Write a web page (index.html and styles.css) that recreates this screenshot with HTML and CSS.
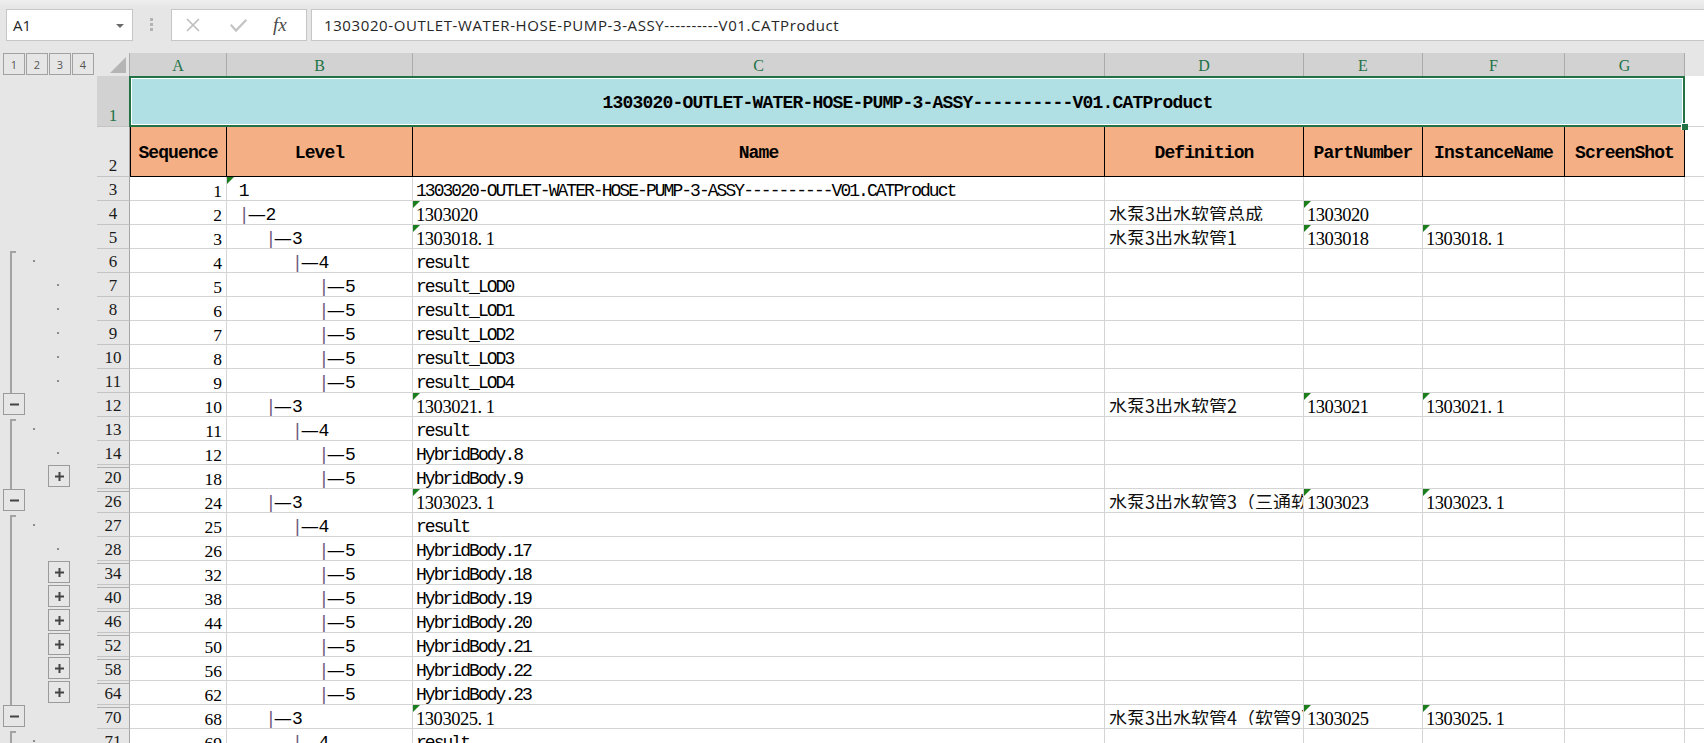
FILE: index.html
```html
<!DOCTYPE html>
<html lang="zh">
<head>
<meta charset="utf-8">
<title>Excel</title>
<link rel="stylesheet" href="styles.css">
</head>
<body>
<div class="toolbar">
  <div class="namebox"><span>A1</span><svg class="nb-arrow" width="8" height="4" viewBox="0 0 8 4"><path d="M0 0H8L4 4Z" fill="#6b6b6b"/></svg></div>
  <div class="grip"><i></i><i></i><i></i></div>
  <div class="fbtns">
    <svg class="ic-x" width="16" height="16" viewBox="0 0 16 16"><path d="M2 2L14 14M14 2L2 14" stroke="#bdbdbd" stroke-width="1.6" fill="none"/></svg>
    <svg class="ic-ok" width="17" height="13" viewBox="0 0 17 13"><path d="M0.8 5.8L6 11.6L16.3 0.8" stroke="#c4c4c4" stroke-width="2.2" fill="none"/></svg>
    <span class="fx">fx</span>
  </div>
  <div class="fbar">1303020-OUTLET-WATER-HOSE-PUMP-3-ASSY----------V01.CATProduct</div>
</div>

<div class="sheet">
  <div class="row hdr">
    <div class="ol lvbtns"><span>1</span><span>2</span><span>3</span><span>4</span></div>
    <div class="corner"><svg width="16" height="16" viewBox="0 0 16 16"><path d="M16 0V16H0Z" fill="#b5b5b5"/></svg></div>
    <div class="ch sel">A</div><div class="ch sel">B</div><div class="ch sel">C</div><div class="ch sel">D</div><div class="ch sel">E</div><div class="ch sel">F</div><div class="ch sel">G</div><div class="ch"></div>
  </div>

  <div class="row r1">
    <div class="ol"></div>
    <div class="rh sel">1</div>
    <div class="title">1303020-OUTLET-WATER-HOSE-PUMP-3-ASSY----------V01.CATProduct</div>
    <div class="c end"></div>
  </div>

  <div class="row r2">
    <div class="ol"></div>
    <div class="rh">2</div>
    <div class="h2 first">Sequence</div><div class="h2">Level</div><div class="h2">Name</div><div class="h2">Definition</div><div class="h2">PartNumber</div><div class="h2">InstanceName</div><div class="h2">ScreenShot</div>
    <div class="c end"></div>
  </div>

  <div class="row">
    <div class="ol"></div>
    <div class="rh">3</div>
    <div class="c num">1</div>
    <div class="c tri"><span class="lv"> 1</span></div>
    <div class="c">1303020-OUTLET-WATER-HOSE-PUMP-3-ASSY----------V01.CATProduct</div>
    <div class="c"></div><div class="c"></div><div class="c"></div><div class="c"></div><div class="c end"></div>
  </div>

  <div class="row">
    <div class="ol"></div>
    <div class="rh">4</div>
    <div class="c num">2</div>
    <div class="c"><span class="lv"> <b class="bar">|</b><i class="dash">—</i>2</span></div>
    <div class="c tri sn">1303020</div>
    <div class="c cjk"><span>水泵3出水软管总成</span></div>
    <div class="c tri sn">1303020</div>
    <div class="c"></div><div class="c"></div><div class="c end"></div>
  </div>

  <div class="row">
    <div class="ol"></div>
    <div class="rh">5</div>
    <div class="c num">3</div>
    <div class="c"><span class="lv">    <b class="bar">|</b><i class="dash">—</i>3</span></div>
    <div class="c tri sn"><span>1303018<span class="pt">.</span>1</span></div>
    <div class="c cjk"><span>水泵3出水软管1</span></div>
    <div class="c tri sn">1303018</div>
    <div class="c tri sn"><span>1303018<span class="pt">.</span>1</span></div>
    <div class="c"></div><div class="c end"></div>
  </div>

  <div class="row">
    <div class="ol"><span class="ln s"></span><span class="dot d2"></span></div>
    <div class="rh">6</div>
    <div class="c num">4</div>
    <div class="c"><span class="lv">       <b class="bar">|</b><i class="dash">—</i>4</span></div>
    <div class="c">result</div>
    <div class="c"></div><div class="c"></div><div class="c"></div><div class="c"></div><div class="c end"></div>
  </div>

  <div class="row">
    <div class="ol"><span class="ln"></span><span class="dot d3"></span></div>
    <div class="rh">7</div>
    <div class="c num">5</div>
    <div class="c"><span class="lv">          <b class="bar">|</b><i class="dash">—</i>5</span></div>
    <div class="c">result_LOD0</div>
    <div class="c"></div><div class="c"></div><div class="c"></div><div class="c"></div><div class="c end"></div>
  </div>

  <div class="row">
    <div class="ol"><span class="ln"></span><span class="dot d3"></span></div>
    <div class="rh">8</div>
    <div class="c num">6</div>
    <div class="c"><span class="lv">          <b class="bar">|</b><i class="dash">—</i>5</span></div>
    <div class="c">result_LOD1</div>
    <div class="c"></div><div class="c"></div><div class="c"></div><div class="c"></div><div class="c end"></div>
  </div>

  <div class="row">
    <div class="ol"><span class="ln"></span><span class="dot d3"></span></div>
    <div class="rh">9</div>
    <div class="c num">7</div>
    <div class="c"><span class="lv">          <b class="bar">|</b><i class="dash">—</i>5</span></div>
    <div class="c">result_LOD2</div>
    <div class="c"></div><div class="c"></div><div class="c"></div><div class="c"></div><div class="c end"></div>
  </div>

  <div class="row">
    <div class="ol"><span class="ln"></span><span class="dot d3"></span></div>
    <div class="rh">10</div>
    <div class="c num">8</div>
    <div class="c"><span class="lv">          <b class="bar">|</b><i class="dash">—</i>5</span></div>
    <div class="c">result_LOD3</div>
    <div class="c"></div><div class="c"></div><div class="c"></div><div class="c"></div><div class="c end"></div>
  </div>

  <div class="row">
    <div class="ol"><span class="ln"></span><span class="dot d3"></span></div>
    <div class="rh">11</div>
    <div class="c num">9</div>
    <div class="c"><span class="lv">          <b class="bar">|</b><i class="dash">—</i>5</span></div>
    <div class="c">result_LOD4</div>
    <div class="c"></div><div class="c"></div><div class="c"></div><div class="c"></div><div class="c end"></div>
  </div>

  <div class="row">
    <div class="ol"><span class="ob l1"><svg width="9" height="9" viewBox="0 0 9 9"><path d="M0 4.5H9" stroke="#444" stroke-width="2"/></svg></span></div>
    <div class="rh">12</div>
    <div class="c num">10</div>
    <div class="c"><span class="lv">    <b class="bar">|</b><i class="dash">—</i>3</span></div>
    <div class="c tri sn"><span>1303021<span class="pt">.</span>1</span></div>
    <div class="c cjk"><span>水泵3出水软管2</span></div>
    <div class="c tri sn">1303021</div>
    <div class="c tri sn"><span>1303021<span class="pt">.</span>1</span></div>
    <div class="c"></div><div class="c end"></div>
  </div>

  <div class="row">
    <div class="ol"><span class="ln s"></span><span class="dot d2"></span></div>
    <div class="rh">13</div>
    <div class="c num">11</div>
    <div class="c"><span class="lv">       <b class="bar">|</b><i class="dash">—</i>4</span></div>
    <div class="c">result</div>
    <div class="c"></div><div class="c"></div><div class="c"></div><div class="c"></div><div class="c end"></div>
  </div>

  <div class="row">
    <div class="ol"><span class="ln"></span><span class="dot d3"></span></div>
    <div class="rh">14</div>
    <div class="c num">12</div>
    <div class="c"><span class="lv">          <b class="bar">|</b><i class="dash">—</i>5</span></div>
    <div class="c">HybridBody.8</div>
    <div class="c"></div><div class="c"></div><div class="c"></div><div class="c"></div><div class="c end"></div>
  </div>

  <div class="row">
    <div class="ol"><span class="ln"></span><span class="ob l3"><svg width="9" height="9" viewBox="0 0 9 9"><path d="M0 4.5H9M4.5 0V9" stroke="#444" stroke-width="2"/></svg></span></div>
    <div class="rh hid">20</div>
    <div class="c num">18</div>
    <div class="c"><span class="lv">          <b class="bar">|</b><i class="dash">—</i>5</span></div>
    <div class="c">HybridBody.9</div>
    <div class="c"></div><div class="c"></div><div class="c"></div><div class="c"></div><div class="c end"></div>
  </div>

  <div class="row">
    <div class="ol"><span class="ob l1"><svg width="9" height="9" viewBox="0 0 9 9"><path d="M0 4.5H9" stroke="#444" stroke-width="2"/></svg></span></div>
    <div class="rh hid">26</div>
    <div class="c num">24</div>
    <div class="c"><span class="lv">    <b class="bar">|</b><i class="dash">—</i>3</span></div>
    <div class="c tri sn"><span>1303023<span class="pt">.</span>1</span></div>
    <div class="c cjk"><span>水泵3出水软管3（三通软管）</span></div>
    <div class="c tri sn">1303023</div>
    <div class="c tri sn"><span>1303023<span class="pt">.</span>1</span></div>
    <div class="c"></div><div class="c end"></div>
  </div>

  <div class="row">
    <div class="ol"><span class="ln s"></span><span class="dot d2"></span></div>
    <div class="rh">27</div>
    <div class="c num">25</div>
    <div class="c"><span class="lv">       <b class="bar">|</b><i class="dash">—</i>4</span></div>
    <div class="c">result</div>
    <div class="c"></div><div class="c"></div><div class="c"></div><div class="c"></div><div class="c end"></div>
  </div>

  <div class="row">
    <div class="ol"><span class="ln"></span><span class="dot d3"></span></div>
    <div class="rh">28</div>
    <div class="c num">26</div>
    <div class="c"><span class="lv">          <b class="bar">|</b><i class="dash">—</i>5</span></div>
    <div class="c">HybridBody.17</div>
    <div class="c"></div><div class="c"></div><div class="c"></div><div class="c"></div><div class="c end"></div>
  </div>

  <div class="row">
    <div class="ol"><span class="ln"></span><span class="ob l3"><svg width="9" height="9" viewBox="0 0 9 9"><path d="M0 4.5H9M4.5 0V9" stroke="#444" stroke-width="2"/></svg></span></div>
    <div class="rh hid">34</div>
    <div class="c num">32</div>
    <div class="c"><span class="lv">          <b class="bar">|</b><i class="dash">—</i>5</span></div>
    <div class="c">HybridBody.18</div>
    <div class="c"></div><div class="c"></div><div class="c"></div><div class="c"></div><div class="c end"></div>
  </div>

  <div class="row">
    <div class="ol"><span class="ln"></span><span class="ob l3"><svg width="9" height="9" viewBox="0 0 9 9"><path d="M0 4.5H9M4.5 0V9" stroke="#444" stroke-width="2"/></svg></span></div>
    <div class="rh hid">40</div>
    <div class="c num">38</div>
    <div class="c"><span class="lv">          <b class="bar">|</b><i class="dash">—</i>5</span></div>
    <div class="c">HybridBody.19</div>
    <div class="c"></div><div class="c"></div><div class="c"></div><div class="c"></div><div class="c end"></div>
  </div>

  <div class="row">
    <div class="ol"><span class="ln"></span><span class="ob l3"><svg width="9" height="9" viewBox="0 0 9 9"><path d="M0 4.5H9M4.5 0V9" stroke="#444" stroke-width="2"/></svg></span></div>
    <div class="rh hid">46</div>
    <div class="c num">44</div>
    <div class="c"><span class="lv">          <b class="bar">|</b><i class="dash">—</i>5</span></div>
    <div class="c">HybridBody.20</div>
    <div class="c"></div><div class="c"></div><div class="c"></div><div class="c"></div><div class="c end"></div>
  </div>

  <div class="row">
    <div class="ol"><span class="ln"></span><span class="ob l3"><svg width="9" height="9" viewBox="0 0 9 9"><path d="M0 4.5H9M4.5 0V9" stroke="#444" stroke-width="2"/></svg></span></div>
    <div class="rh hid">52</div>
    <div class="c num">50</div>
    <div class="c"><span class="lv">          <b class="bar">|</b><i class="dash">—</i>5</span></div>
    <div class="c">HybridBody.21</div>
    <div class="c"></div><div class="c"></div><div class="c"></div><div class="c"></div><div class="c end"></div>
  </div>

  <div class="row">
    <div class="ol"><span class="ln"></span><span class="ob l3"><svg width="9" height="9" viewBox="0 0 9 9"><path d="M0 4.5H9M4.5 0V9" stroke="#444" stroke-width="2"/></svg></span></div>
    <div class="rh hid">58</div>
    <div class="c num">56</div>
    <div class="c"><span class="lv">          <b class="bar">|</b><i class="dash">—</i>5</span></div>
    <div class="c">HybridBody.22</div>
    <div class="c"></div><div class="c"></div><div class="c"></div><div class="c"></div><div class="c end"></div>
  </div>

  <div class="row">
    <div class="ol"><span class="ln"></span><span class="ob l3"><svg width="9" height="9" viewBox="0 0 9 9"><path d="M0 4.5H9M4.5 0V9" stroke="#444" stroke-width="2"/></svg></span></div>
    <div class="rh hid">64</div>
    <div class="c num">62</div>
    <div class="c"><span class="lv">          <b class="bar">|</b><i class="dash">—</i>5</span></div>
    <div class="c">HybridBody.23</div>
    <div class="c"></div><div class="c"></div><div class="c"></div><div class="c"></div><div class="c end"></div>
  </div>

  <div class="row">
    <div class="ol"><span class="ob l1"><svg width="9" height="9" viewBox="0 0 9 9"><path d="M0 4.5H9" stroke="#444" stroke-width="2"/></svg></span></div>
    <div class="rh hid">70</div>
    <div class="c num">68</div>
    <div class="c"><span class="lv">    <b class="bar">|</b><i class="dash">—</i>3</span></div>
    <div class="c tri sn"><span>1303025<span class="pt">.</span>1</span></div>
    <div class="c cjk"><span>水泵3出水软管4（软管9）</span></div>
    <div class="c tri sn">1303025</div>
    <div class="c tri sn"><span>1303025<span class="pt">.</span>1</span></div>
    <div class="c"></div><div class="c end"></div>
  </div>

  <div class="row">
    <div class="ol"><span class="ln s"></span><span class="dot d2"></span></div>
    <div class="rh">71</div>
    <div class="c num">69</div>
    <div class="c"><span class="lv">       <b class="bar">|</b><i class="dash">—</i>4</span></div>
    <div class="c">result</div>
    <div class="c"></div><div class="c"></div><div class="c"></div><div class="c"></div><div class="c end"></div>
  </div>
</div>
</body>
</html>
```

FILE: styles.css
```css
* { box-sizing: border-box; }
html, body { margin: 0; padding: 0; }
body {
  width: 1704px;
  height: 743px;
  overflow: hidden;
  background: #e6e6e6;
  font-family: "Open Sans", "Noto Sans", sans-serif;
  color: #000;
}

/* ---------- formula toolbar ---------- */
.toolbar {
  display: flex;
  align-items: flex-start;
  height: 53px;
  padding: 9px 0 0 6px;
  background: linear-gradient(#eeeeee, #e6e6e6 8px);
}
.namebox {
  width: 127px;
  height: 32px;
  background: #fff;
  border: 1px solid #c6c6c6;
  display: flex;
  align-items: center;
  justify-content: space-between;
  padding: 0 8px 0 6px;
  font-size: 15px;
  color: #262626;
}
.nb-arrow { margin-top: 1px; }
.grip {
  display: flex;
  flex-direction: column;
  gap: 2px;
  margin: 9px 0 0 17px;
}
.grip i { display: block; width: 3px; height: 3px; background: #b3b3b3; }
.fbtns {
  margin-left: 18px;
  width: 136px;
  height: 32px;
  background: #fff;
  border: 1px solid #c6c6c6;
  display: flex;
  align-items: center;
}
.ic-x { margin-left: 13px; }
.ic-ok { margin-left: 29px; margin-top: 1px; }
.fx {
  margin-left: 26px;
  font-family: "Liberation Serif", serif;
  font-style: italic;
  font-size: 19px;
  color: #4a4a4a;
}
.fbar {
  margin-left: 4px;
  flex: 1;
  height: 32px;
  background: #fff;
  border: 1px solid #c6c6c6;
  border-right: none;
  display: flex;
  align-items: center;
  padding-left: 12px;
  font-size: 15px;
  letter-spacing: 0.6px;
  color: #262626;
  white-space: nowrap;
}

/* ---------- sheet grid ---------- */
.sheet { display: flex; flex-direction: column; }
.row {
  display: grid;
  grid-template-columns: 97px 33px 97px 186px 692px 199px 119px 142px 120px 1fr;
  height: 24px;
}
.row.hdr { height: 23px; }
.row.r1 { height: 51px; }
.row.r2 { height: 50px; }

/* outline gutter */
.ol {
  background: #e6e6e6;
  display: grid;
  grid-template-columns: 3px 23px 23px 23px 1fr;
  grid-template-rows: 100%;
}
.lvbtns span {
  grid-row: 1;
  width: 22px;
  height: 22px;
  border: 1px solid #a2a2a2;
  display: flex;
  align-items: center;
  justify-content: center;
  font-size: 11px;
  color: #555;
}
.lvbtns span:nth-child(1) { grid-column: 2; }
.lvbtns span:nth-child(2) { grid-column: 3; }
.lvbtns span:nth-child(3) { grid-column: 4; }
.lvbtns span:nth-child(4) { grid-column: 5; }

.ln {
  grid-column: 2;
  grid-row: 1;
  margin-left: 7px;
  width: 2px;
  background: #a3a3a3;
}
.ln.s {
  margin-top: 2px;
  width: 6px;
  background: none;
  border-left: 2px solid #a3a3a3;
  border-top: 2px solid #a3a3a3;
}
.dot {
  grid-row: 1;
  width: 2px;
  height: 2px;
  background: #8c8c8c;
  align-self: center;
}
.dot.d2 { grid-column: 3; margin-left: 7px; }
.dot.d3 { grid-column: 4; margin-left: 8px; }
.ob {
  grid-row: 1;
  width: 22px;
  height: 22px;
  border: 1px solid #9a9a9a;
  display: flex;
  align-items: center;
  justify-content: center;
  align-self: start;
}
.ob svg { display: block; }
.ob.l1 { grid-column: 2; }
.ob.l3 { grid-column: 4; margin-left: -1px; }

/* headers */
.corner {
  background: #e6e6e6;
  border-right: 1px solid #ababab;
  display: flex;
  align-items: flex-end;
  justify-content: flex-end;
  padding: 0 3px 3px 0;
}
.corner svg { display: block; }
.ch {
  background: #e6e6e6;
  font-family: "Liberation Serif", serif;
  font-size: 16px;
  line-height: 17px;
  color: #217346;
  display: flex;
  align-items: flex-end;
  justify-content: center;
  padding-bottom: 2px;
}
.ch.sel {
  background: #d2d2d2;
  border-right: 1px solid #ababab;
}
.rh {
  background: #e6e6e6;
  border-bottom: 1px solid #c4c4c4;
  border-right: 1px solid #a5a5a5;
  font-family: "Liberation Serif", serif;
  font-size: 17px;
  line-height: 16px;
  color: #1a1a1a;
  display: flex;
  align-items: flex-end;
  justify-content: center;
  padding-bottom: 2px;
}
.rh.sel { background: #d2d2d2; color: #217346; }
.rh.hid { box-shadow: inset 0 2px 0 #e6e6e6, inset 0 3px 0 #b0b0b0; }

/* cells */
.c {
  position: relative;
  background: #fff;
  border-right: 1px solid #d4d4d4;
  border-bottom: 1px solid #d4d4d4;
  display: flex;
  align-items: flex-end;
  white-space: pre;
  font-family: "Liberation Mono", monospace;
  font-size: 18px;
  letter-spacing: -1.96px;
  line-height: 15px;
  padding: 0 3px 1px 3px;
  color: #000;
}
.c.end { border-right: none; }
.c.num {
  justify-content: flex-end;
  font-family: "Liberation Serif", serif;
  font-size: 17.5px;
  letter-spacing: 0;
  padding: 0 4px 1px 3px;
}
.c.sn {
  font-family: "Liberation Serif", serif;
  font-size: 18.5px;
  letter-spacing: -0.45px;
}
.pt { margin-right: 4px; }
.c.cjk {
  font-family: "Noto Sans CJK SC", sans-serif;
  font-size: 18px;
  letter-spacing: 0;
  padding: 0 0 3px 4px;
  overflow: hidden;
  color: #111;
}
.c.cjk span {
  min-width: 0;
  overflow: hidden;
}
.c.tri::before {
  content: "";
  position: absolute;
  left: 0;
  top: 0;
  border-top: 7px solid #1b7d1b;
  border-right: 7px solid transparent;
}
.lv { white-space: pre; }
.bar {
  font-weight: normal;
  color: #6e5a7e;
}
.dash {
  font-style: normal;
  display: inline-block;
  width: 17.7px;
  letter-spacing: 0;
  text-align: center;
  transform: scaleX(1.5);
}

/* title row (merged A1:G1, selected) */
.title {
  grid-column: 3 / 10;
  position: relative;
  z-index: 2;
  background: #b0dfe4;
  display: flex;
  align-items: center;
  justify-content: center;
  font-family: "Liberation Mono", monospace;
  font-weight: bold;
  font-size: 18px;
  letter-spacing: -0.8px;
  white-space: pre;
  padding-top: 2px;
}
.title::after {
  content: "";
  position: absolute;
  left: -1px;
  top: 0;
  right: 0;
  bottom: 0;
  border: 2px solid #217346;
  box-shadow: inset 0 0 0 1px #fff;
}
.title::before {
  content: "";
  position: absolute;
  right: -3px;
  bottom: -3px;
  width: 6px;
  height: 6px;
  background: #217346;
  border-left: 1px solid #fff;
  border-top: 1px solid #fff;
  z-index: 3;
}

/* header row 2 */
.h2 {
  background: #f4b084;
  border-right: 1px solid #000;
  border-bottom: 1px solid #000;
  display: flex;
  align-items: center;
  justify-content: center;
  font-family: "Liberation Mono", monospace;
  font-weight: bold;
  font-size: 18px;
  letter-spacing: -0.9px;
  white-space: pre;
  padding-top: 2px;
}
.h2.first { box-shadow: inset 1px 0 0 #000; }
```
